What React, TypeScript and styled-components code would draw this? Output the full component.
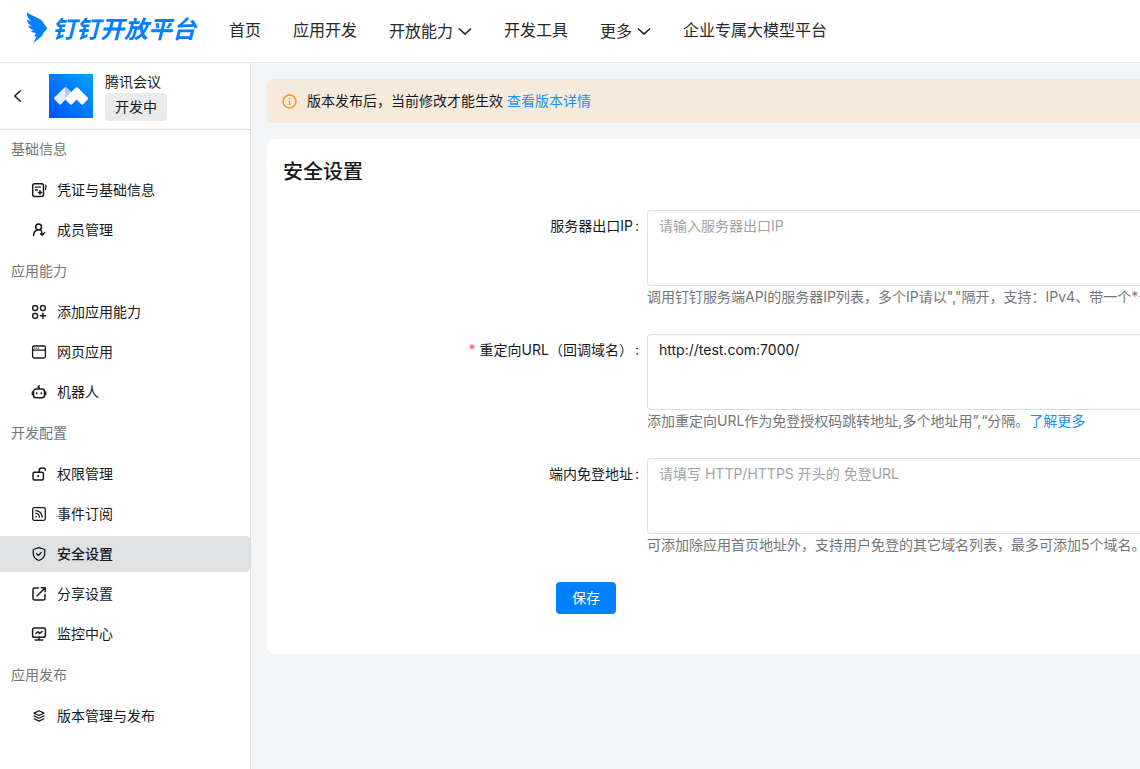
import React, { useState } from 'react';
import styled, { createGlobalStyle } from 'styled-components';

const GlobalStyle = createGlobalStyle`
  *, *::before, *::after { box-sizing: border-box; }
  body {
    margin: 0;
    background: #f4f5f7;
    color: #171a1d;
    font: 14px/22px Inter, "Noto Sans CJK SC", sans-serif;
  }
  button, textarea { font: inherit; color: inherit; }
  a { color: #1890ff; text-decoration: none; }
`;

const Page = styled.div`
  min-height: 100vh;
  display: flex;
  flex-direction: column;
`;

const TopBar = styled.header`
  display: flex;
  align-items: center;
  height: 63px;
  padding: 0 24px;
  background: #fff;
  border-bottom: 1px solid #e7e8ea;
`;

const Brand = styled.a`
  display: flex;
  align-items: center;
  gap: 4px;
  height: 56px;
  width: 205px;
  flex: none;
  align-self: flex-start;
  color: #0080ff;
  font-size: 24px;
  line-height: 32px;
  font-weight: 600;
  font-style: italic;
  white-space: nowrap;
`;

const BrandName = styled.span`
  padding-top: 4px;
`;

const TopNav = styled.nav`
  display: flex;
  align-items: center;
  gap: 32px;
  height: 60px;
  align-self: flex-start;
  font-size: 16px;
  line-height: 24px;
  white-space: nowrap;
`;

const NavLink = styled.a`
  color: #262829;
`;

const NavMenu = styled.button`
  display: flex;
  align-items: center;
  gap: 5px;
  padding: 2px 0 0;
  border: 0;
  background: none;
  color: #262829;
  cursor: pointer;
`;

const Body = styled.div`
  flex: 1;
  display: flex;
`;

const Sidebar = styled.aside`
  flex: none;
  width: 251px;
  background: #fff;
  border-right: 1px solid #dcdee0;
`;

const AppHead = styled.div`
  display: flex;
  align-items: center;
  height: 67px;
  padding-left: 10px;
  border-bottom: 1px solid #dcdee0;
`;

const BackButton = styled.button`
  display: flex;
  width: 39px;
  padding: 0;
  border: 0;
  background: none;
  cursor: pointer;
`;

const AppInfo = styled.div`
  display: flex;
  flex-direction: column;
  align-items: flex-start;
  margin-left: 12px;
`;

const Status = styled.span`
  padding: 3px 10px;
  border-radius: 4px;
  background: #e9eaec;
`;

const Menu = styled.nav`
  display: flex;
  flex-direction: column;
  gap: 4px;
`;

const GroupTitle = styled.div`
  padding: 8px 11px;
  color: #747677;
`;

const MenuItem = styled.a<{ $active?: boolean }>`
  display: flex;
  align-items: center;
  gap: 10px;
  height: 36px;
  padding-left: 31px;
  border-radius: 0 4px 4px 0;
  color: #171a1d;
  background: ${(p) => (p.$active ? '#e0e1e3' : 'transparent')};
  font-weight: ${(p) => (p.$active ? 500 : 400)};
`;

const Main = styled.main`
  flex: 1;
  min-width: 0;
  overflow: hidden;
`;

const Content = styled.div`
  display: flex;
  flex-direction: column;
  gap: 16px;
  min-width: 1156px;
  padding: 16px;
`;

const Notice = styled.div`
  display: flex;
  align-items: center;
  gap: 10px;
  height: 44px;
  padding: 0 15px;
  border-radius: 6px;
  background: #f6ebda;
`;

const Panel = styled.section`
  padding: 16px;
  border-radius: 8px;
  background: #fff;
`;

const Title = styled.h1`
  margin: 0 0 21px;
  font-size: 20px;
  line-height: 34px;
  font-weight: 500;
`;

const Field = styled.div`
  display: grid;
  grid-template-columns: 1fr 2fr;
  margin-bottom: 24px;
`;

const Label = styled.label<{ $required?: boolean }>`
  padding-right: 8px;
  line-height: 32px;
  text-align: right;
  &::before {
    content: ${(p) => (p.$required ? '"*"' : 'none')};
    margin-right: 4px;
    color: #ff4d4f;
  }
  &::after { content: ":"; margin-left: 2px; }
`;

const Control = styled.div`
  min-width: 0;
  min-height: 100px;
`;

const TextArea = styled.textarea`
  display: block;
  width: 100%;
  height: 76px;
  padding: 4px 11px;
  border: 1px solid #dcdee0;
  border-radius: 4px;
  background: #fff;
  outline: none;
  resize: none;
  &::placeholder { color: #a2a3a5; opacity: 1; }
`;

const Hint = styled.div`
  color: #747677;
  white-space: nowrap;
`;

const Actions = styled.div`
  padding-left: 25%;
  margin-bottom: 24px;
`;

const SaveButton = styled.button`
  display: block;
  height: 32px;
  padding: 0 16px;
  border: 0;
  border-radius: 4px;
  background: #0080ff;
  color: #fff;
  cursor: pointer;
`;

const Icon = ({ children }: { children: React.ReactNode }) => (
  <svg width="16" height="16" viewBox="0 0 16 16" fill="none" stroke="currentColor" strokeWidth="1.5" strokeLinecap="round" strokeLinejoin="round" aria-hidden="true">
    {children}
  </svg>
);

const icons: Record<string, React.ReactNode> = {
  credential: (
    <>
      <rect x="1.7" y="1.7" width="10.8" height="12.8" rx="2" />
      <path d="M14.8 3.2q.5 1.800-.3 4.200M4.500 5.200h5M4.500 8h2" strokeWidth="1.3" />
      <path d="M9 8.300l.7 1.500 1.500.7-1.500.7L9 12.700l-.7-1.500-1.500-.7 1.500-.7z" fill="currentColor" strokeWidth=".7" />
    </>
  ),
  member: (
    <>
      <circle cx="7.6" cy="5" r="2.9" />
      <path d="M2.500 13.400c.2-3 1.700-4.900 4.300-5.400M9.400 7.500c1.300.9 1.600 2.500 1.700 5.700l2.600-2.500M11.100 13.200l-1.500-1.500" />
    </>
  ),
  add: (
    <>
      <rect x="1.7" y="1.7" width="4.8" height="4.8" rx="1.7" />
      <rect x="9.5" y="1.7" width="4.8" height="4.8" rx="1.7" />
      <rect x="1.7" y="9.5" width="4.8" height="4.8" rx="1.7" />
      <path d="M11.900 9.300v5M9.400 11.800h5" />
    </>
  ),
  web: (
    <>
      <rect x="1.6" y="2" width="12.8" height="12" rx="1.5" strokeWidth="1.3" />
      <path d="M1.600 6.200h12.800M3.700 4.200h.1M5.700 4.200h.1M7.700 4.200h.1" strokeWidth="1.2" />
    </>
  ),
  robot: (
    <>
      <path d="M5 5h6a2.500 2.500 0 0 1 2.500 2.500v3.700a2.500 2.500 0 0 1-2.500 2.500H5a2.500 2.500 0 0 1-2.500-2.500V7.500A2.500 2.500 0 0 1 5 5zM8 4.800V3.500L7 3.200l1.300-1.400" />
      <path d="M1.500 8.200v2.200M14.500 8.200v2.200" strokeWidth="1.8" />
      <path d="M5.700 9.100v.4M10.300 9.100v.4" strokeWidth="1.7" />
    </>
  ),
  lock: (
    <>
      <rect x="2" y="6.2" width="10.4" height="7.8" rx="1.5" />
      <path d="M8.200 6V4.500c0-1.600 1-2.500 2.500-2.500h1.200c1.500 0 2.500.7 2.500 2.200" />
      <path d="M7.200 9.900v.3" strokeWidth="2" />
    </>
  ),
  event: (
    <>
      <rect x="1.7" y="1.7" width="12.6" height="12.6" rx="1.5" strokeWidth="1.3" />
      <path d="M4.800 4.600c3.500 0 6.400 2.900 6.400 6.400M4.800 7.400c2 0 3.600 1.600 3.600 3.600M5 10.700h.3" strokeWidth="1.4" />
    </>
  ),
  shield: (
    <>
      <path d="M8 1.600l5.700 1.900v4.300c0 3.100-2.300 5.500-5.700 6.700-3.400-1.200-5.700-3.600-5.700-6.700V3.500z" strokeWidth="1.3" />
      <path d="M5.600 7.800l1.800 1.700 3-3.100" strokeWidth="1.3" />
    </>
  ),
  share: (
    <path d="M7.500 2H3.500A1.500 1.500 0 0 0 2 3.500v9A1.500 1.500 0 0 0 3.500 14h9a1.500 1.500 0 0 0 1.500-1.500V8.500M10.200 1.800H14.200V5.800M13.800 2.200L6.200 9.800" />
  ),
  monitor: (
    <>
      <rect x="1.6" y="2" width="12.8" height="9.2" rx="1.8" />
      <path d="M8 11.200v2.500M4.300 14h7.400M4.900 7.500l2-1.800 1.800 1.700 2.400-1.900" />
    </>
  ),
  version: (
    <path strokeWidth="1.2" d="M8 2.700l5 2.400-5 2.400-5-2.400zM3 7.900l5 2.400 5-2.400M3 10.700l5 2.400 5-2.400" />
  ),
};

const Chevron = () => (
  <svg width="14" height="14" viewBox="0 0 14 14" fill="none" stroke="currentColor" strokeWidth="1.6" aria-hidden="true">
    <path d="M1 4.500l6 5.700 6-5.700" />
  </svg>
);

const BrandMark = () => (
  <svg width="24" height="32" viewBox="0 0 24 32" fill="currentColor" aria-hidden="true">
    <path d="M3.200.3C6.500 3.500 12 4.800 16 7.300c2.600 1.600 3.500 3.200 4.300 5 .9 1.400 2.700 2.400 2.700 4 0 1.700-2 2.400-3 4-.7 1.100-1.300 2.300-2.300 3.600-2.200 2.600-5.200 4.400-8.400 7.100l3-6.300-2-.4 1.700-3.400c-2.300 0-4.200-.7-5.300-2.200l3.300-.4c-3-.7-5.300-2.200-6-4.700l4.300.9C5 12.600 3 10.300 2.900 7.400l4.600 2.200C4.200 7 2.400 3.600 3.200.3z" />
  </svg>
);

const MeetingLogo = () => (
  <svg width="44" height="44" viewBox="0 0 44 44" aria-hidden="true">
    <defs>
      <linearGradient id="meeting-bg" x1="0" y1="1" x2="1" y2="0">
        <stop offset="0" stopColor="#0052ff" />
        <stop offset="1" stopColor="#00a2ff" />
      </linearGradient>
      <linearGradient id="meeting-fold" x1="0" y1="0" x2="1" y2="1">
        <stop offset="0" stopColor="#8db8ff" />
        <stop offset="1" stopColor="#d5e4ff" />
      </linearGradient>
    </defs>
    <path fill="url(#meeting-bg)" d="M0 0h44v44H0z" />
    <path fill="#e2edff" d="M15.200 13.800q1.400-1.100 2.700 0l4.600 4.700-10.300 11.700q-1 .9-2 0l-4.800-4.900q-.8-.9 0-1.900z" />
    <path fill="url(#meeting-fold)" d="M16.300 13.300q.9 0 1.600.6l4.500 4.600-6.100 6.900z" />
    <path fill="#fff" d="M26.200 13.900q1.500-1.400 3 0l9.500 9.600q.8.900 0 1.900l-4.500 4.900q-1 .9-2 0l-4.600-4.700-4.600 4.700q-1 .9-2 0l-4.700-4.900q-.5-.6 0-1.200z" />
  </svg>
);

const topItems = [
  { text: '首页' },
  { text: '应用开发' },
  { text: '开放能力', menu: true },
  { text: '开发工具' },
  { text: '更多', menu: true },
  { text: '企业专属大模型平台' },
];

const groups = [
  { title: '基础信息', items: [['credential', '凭证与基础信息'], ['member', '成员管理']] },
  { title: '应用能力', items: [['add', '添加应用能力'], ['web', '网页应用'], ['robot', '机器人']] },
  {
    title: '开发配置',
    items: [
      ['lock', '权限管理'],
      ['event', '事件订阅'],
      ['shield', '安全设置'],
      ['share', '分享设置'],
      ['monitor', '监控中心'],
    ],
  },
  { title: '应用发布', items: [['version', '版本管理与发布']] },
];

export default function App() {
  const [redirect, setRedirect] = useState('http://test.com:7000/');

  return (
    <Page>
      <GlobalStyle />
      <TopBar>
        <Brand href="#">
          <BrandMark />
          <BrandName>钉钉开放平台</BrandName>
        </Brand>
        <TopNav>
          {topItems.map((item) =>
            item.menu ? (
              <NavMenu key={item.text} type="button">
                {item.text}
                <Chevron />
              </NavMenu>
            ) : (
              <NavLink key={item.text} href="#">{item.text}</NavLink>
            ),
          )}
        </TopNav>
      </TopBar>
      <Body>
        <Sidebar>
          <AppHead>
            <BackButton type="button" aria-label="返回">
              <Icon><path d="M10.300 2.800L4.800 8l5.500 5.200" /></Icon>
            </BackButton>
            <MeetingLogo />
            <AppInfo>
              <span>腾讯会议</span>
              <Status>开发中</Status>
            </AppInfo>
          </AppHead>
          <Menu>
            {groups.map((group) => (
              <React.Fragment key={group.title}>
                <GroupTitle>{group.title}</GroupTitle>
                {group.items.map(([icon, text]) => (
                  <MenuItem key={text} href="#" $active={icon === 'shield'}>
                    <Icon>{icons[icon]}</Icon>
                    {text}
                  </MenuItem>
                ))}
              </React.Fragment>
            ))}
          </Menu>
        </Sidebar>
        <Main>
          <Content>
            <Notice>
              <svg width="15" height="15" viewBox="0 0 15 15" fill="none" stroke="#ff9200" strokeWidth="1.4" aria-hidden="true">
                <circle cx="7.5" cy="7.5" r="6.5" />
                <path d="M7.500 6.500v4.500M7.500 4v1.300" />
              </svg>
              <span>
                版本发布后，当前修改才能生效 <a href="#">查看版本详情</a>
              </span>
            </Notice>
            <Panel>
              <Title>安全设置</Title>
              <form onSubmit={(e) => e.preventDefault()}>
                <Field>
                  <Label htmlFor="server-ip">服务器出口IP</Label>
                  <Control>
                    <TextArea id="server-ip" placeholder="请输入服务器出口IP" />
                    <Hint>调用钉钉服务端API的服务器IP列表，多个IP请以","隔开，支持：IPv4、带一个*号</Hint>
                  </Control>
                </Field>
                <Field>
                  <Label htmlFor="redirect-url" $required>重定向URL（回调域名）</Label>
                  <Control>
                    <TextArea id="redirect-url" value={redirect} onChange={(e) => setRedirect(e.target.value)} />
                    <Hint>添加重定向URL作为免登授权码跳转地址,多个地址用”,“分隔。<a href="#">了解更多</a></Hint>
                  </Control>
                </Field>
                <Field>
                  <Label htmlFor="login-url">端内免登地址</Label>
                  <Control>
                    <TextArea id="login-url" placeholder="请填写 HTTP/HTTPS 开头的 免登URL" />
                    <Hint>可添加除应用首页地址外，支持用户免登的其它域名列表，最多可添加5个域名。</Hint>
                  </Control>
                </Field>
                <Actions>
                  <SaveButton type="submit">保存</SaveButton>
                </Actions>
              </form>
            </Panel>
          </Content>
        </Main>
      </Body>
    </Page>
  );
}
